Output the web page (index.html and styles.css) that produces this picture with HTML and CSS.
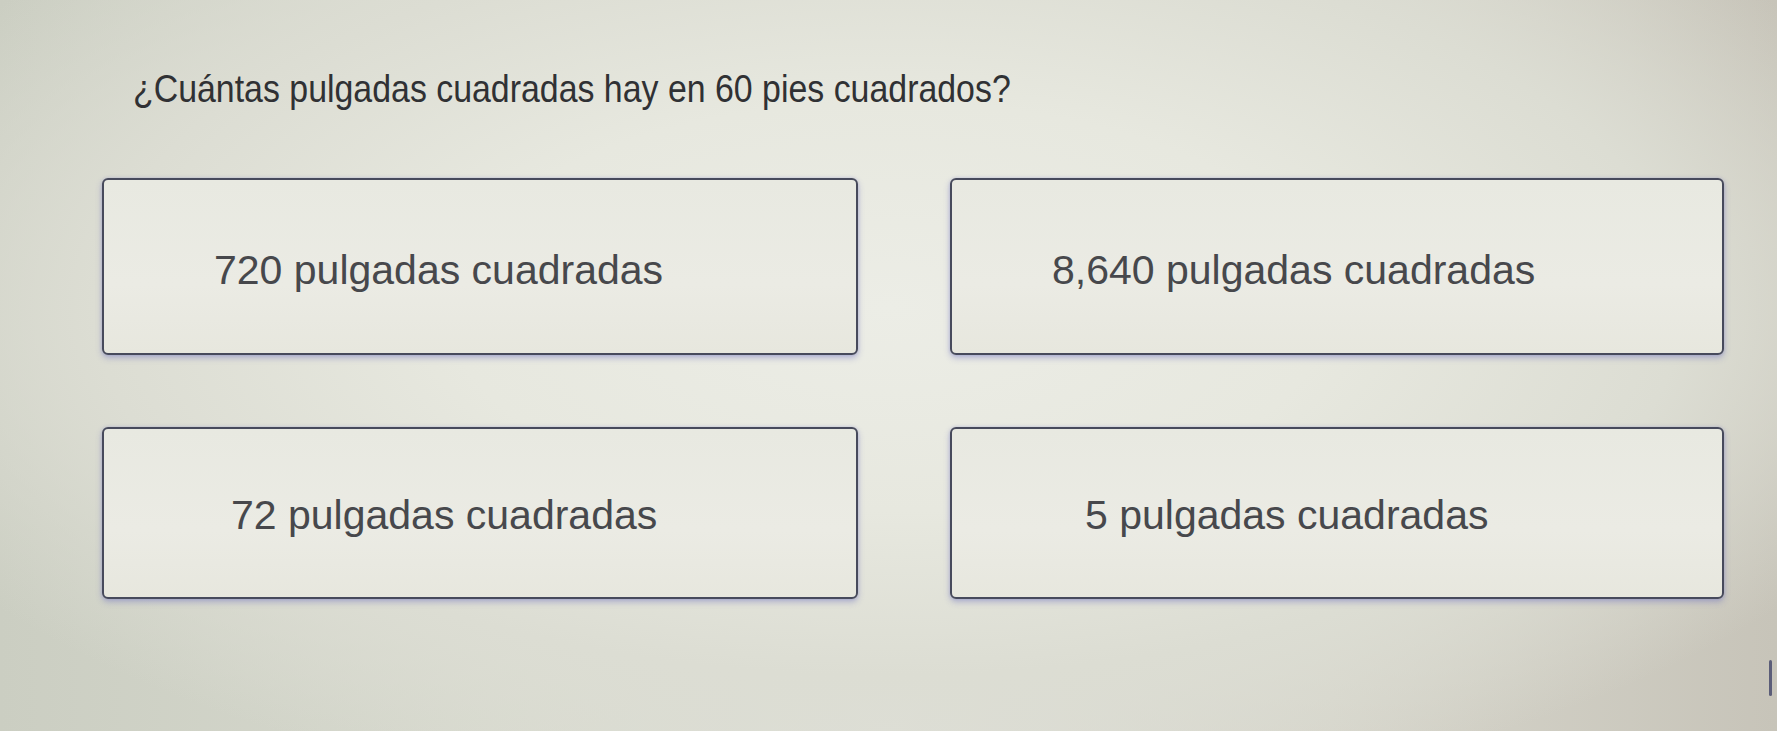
FILE: index.html
```html
<!DOCTYPE html>
<html lang="es">
<head>
<meta charset="utf-8">
<title>Pregunta</title>
<link rel="stylesheet" href="styles.css">
</head>
<body>
  <main class="quiz">
    <h1 class="question"><span class="question-text">¿Cuántas pulgadas cuadradas hay en 60 pies cuadrados?</span></h1>
    <div class="choices">
      <button class="choice choice-a">720 pulgadas cuadradas</button>
      <button class="choice choice-b">8,640 pulgadas cuadradas</button>
      <button class="choice choice-c">72 pulgadas cuadradas</button>
      <button class="choice choice-d">5 pulgadas cuadradas</button>
    </div>
  </main>
  <span class="scroll-mark"></span>
</body>
</html>
```
FILE: styles.css
```css
html, body {
  margin: 0;
  height: 100%;
}

body {
  width: 1777px;
  height: 731px;
  overflow: hidden;
  position: relative;
  font-family: "Liberation Sans", Arial, sans-serif;
  background:
    radial-gradient(ellipse 62% 70% at 50% 42%, #ecede6 0%, #e7e8df 40%, #dcddd3 72%, rgba(200,199,188,0) 100%),
    linear-gradient(90deg, #cbcec2 0%, #d8dacf 30%, #dedfd8 50%, #d6d5cb 75%, #c7c4b9 100%);
}

.quiz {
  padding: 68px 0 0 0;
}

.question {
  margin: 0 0 68px 133px;
  font-size: 38.5px;
  font-weight: normal;
  line-height: 42px;
  color: #303134;
}

.question-text {
  display: inline-block;
  transform: scaleX(0.88);
  transform-origin: left center;
  white-space: nowrap;
}

.choices {
  display: grid;
  grid-template-columns: 756px 774px;
  grid-template-rows: 177px 172px;
  column-gap: 92px;
  row-gap: 72px;
  padding-left: 102px;
}

.choice {
  display: flex;
  align-items: center;
  margin: 0;
  padding: 8px 0 0 110px;
  font-family: "Liberation Sans", Arial, sans-serif;
  font-size: 41px;
  color: #47484c;
  text-align: left;
  background: linear-gradient(180deg, #e8e9e1 0%, #ebebe4 60%, #e7e7de 100%);
  border: 2.5px solid #474a5c;
  border-radius: 6px;
  box-shadow: 0 3px 6px rgba(110, 112, 190, 0.45), 0 0 3px rgba(120, 122, 200, 0.3);
}

.choice-b { padding-left: 100px; }
.choice-c { padding-left: 127px; padding-top: 4px; }
.choice-d { padding-left: 133px; padding-top: 4px; }

.scroll-mark {
  position: absolute;
  left: 1769px;
  top: 660px;
  width: 3px;
  height: 36px;
  background: #5b5d78;
  border-radius: 2px;
}
```
